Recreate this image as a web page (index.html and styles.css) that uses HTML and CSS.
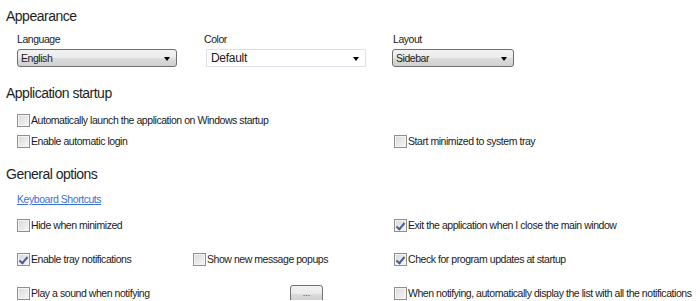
FILE: index.html
```html
<!DOCTYPE html>
<html lang="en">
	<head>
		<meta charset="UTF-8" />
		<title>Options</title>
		<link rel="stylesheet" href="styles.css">
	</head>
	<body>
		<div class="options">
			<h2 class="section-title">Appearance</h2>
			<div class="appearance">
				<div class="field">
					<div class="field-label">Language</div>
					<div class="combo">English<span class="arrow"></span></div>
				</div>
				<div class="field field-color">
					<div class="field-label">Color</div>
					<div class="combo combo-flat">Default<span class="arrow"></span></div>
				</div>
				<div class="field">
					<div class="field-label">Layout</div>
					<div class="combo combo-small">Sidebar<span class="arrow"></span></div>
				</div>
			</div>

			<h2 class="section-title title-startup">Application startup</h2>
			<div class="startup">
				<label class="check wide"><span class="box"></span>Automatically launch the application on Windows startup</label>
				<label class="check"><span class="box"></span>Enable automatic login</label>
				<label class="check col-right"><span class="box"></span>Start minimized to system tray</label>
			</div>

			<h2 class="section-title title-general">General options</h2>
			<a class="link" href="#">Keyboard Shortcuts</a>
			<div class="general">
				<label class="check"><span class="box"></span>Hide when minimized</label>
				<span></span>
				<label class="check"><span class="box checked"></span>Exit the application when I close the main window</label>

				<label class="check"><span class="box checked"></span>Enable tray notifications</label>
				<label class="check"><span class="box"></span>Show new message popups</label>
				<label class="check"><span class="box checked"></span>Check for program updates at startup</label>

				<label class="check"><span class="box"></span>Play a sound when notifying</label>
				<div class="btn-cell"><button class="dots-btn">...</button></div>
				<label class="check"><span class="box"></span>When notifying, automatically display the list with all the notifications</label>
			</div>
		</div>
	</body>
</html>
```

FILE: styles.css
```css
* {
	margin: 0;
	padding: 0;
	box-sizing: border-box;
}

body {
	font-family: 'Liberation Sans', Arial, sans-serif;
	font-size: 10.5px;
	line-height: 13px;
	letter-spacing: -0.45px;
	color: #1a1a1a;
	background: #fff;
}

.options {
	padding: 8px 0 0 0;
}

.section-title {
	font-size: 14px;
	line-height: 16px;
	font-weight: normal;
	color: #1e1e1e;
	padding-left: 6px;
	letter-spacing: -0.5px;
}

.title-startup {
	margin-top: 18px;
}

.title-general {
	margin-top: 18px;
}

/* Appearance */
.appearance {
	display: grid;
	grid-template-columns: 187px 189px 1fr;
	padding-left: 17px;
	margin-top: 9px;
}

.field-label {
	margin-bottom: 3px;
}

.field-color .combo {
	margin-left: 2px;
}

.combo {
	position: relative;
	width: 160px;
	height: 18px;
	padding: 2px 0 0 3px;
	border: 1px solid #707070;
	border-radius: 3px;
	background: linear-gradient(#f2f2f2 0%, #ebebeb 50%, #dddddd 51%, #cfcfcf 100%);
}

.combo-flat {
	background: #fff;
	border-color: #dcdfe6;
	border-radius: 1px;
	font-size: 12px;
	letter-spacing: -0.3px;
	padding-left: 4px;
}

.combo-small {
	width: 122px;
	margin-left: -1px;
}

.arrow {
	position: absolute;
	right: 6px;
	top: 7px;
	border-left: 3.5px solid transparent;
	border-right: 3.5px solid transparent;
	border-top: 4px solid #000;
}

/* Checkboxes */
.check {
	display: flex;
	align-items: center;
	height: 13px;
	white-space: nowrap;
}

.box {
	position: relative;
	flex: none;
	width: 13px;
	height: 13px;
	margin-right: 1px;
	border: 1px solid #8e8f8f;
	background: linear-gradient(135deg, #d8d8d8, #f7f7f7);
	box-shadow: inset 0 0 0 1px #f4f4f4;
}

.box.checked::after {
	content: '';
	position: absolute;
	left: 3px;
	top: 1px;
	width: 3px;
	height: 7px;
	border-right: 2px solid #4a5f97;
	border-bottom: 2px solid #4a5f97;
	transform: rotate(40deg);
}

.startup {
	display: grid;
	grid-template-columns: 377px 1fr;
	row-gap: 8px;
	padding-left: 17px;
	margin-top: 13px;
}

.startup .wide {
	grid-column: 1 / 3;
}

.link {
	display: block;
	width: max-content;
	margin: 11px 0 0 17px;
	color: #3b6fd4;
}

.general {
	display: grid;
	grid-template-columns: 176px 201px 1fr;
	grid-template-rows: 13px 13px 13px;
	row-gap: 21px;
	padding-left: 17px;
	margin-top: 13px;
}

.btn-cell {
	display: flex;
	align-items: center;
	justify-content: flex-start;
}

.dots-btn {
	width: 33px;
	height: 17px;
	margin-left: 97px;
	border: 1px solid #707070;
	border-radius: 3px;
	background: linear-gradient(#f2f2f2 0%, #ebebeb 50%, #dddddd 51%, #cfcfcf 100%);
	font-family: 'Liberation Sans', Arial, sans-serif;
	font-size: 9px;
	line-height: 9px;
	color: #444;
}
```
